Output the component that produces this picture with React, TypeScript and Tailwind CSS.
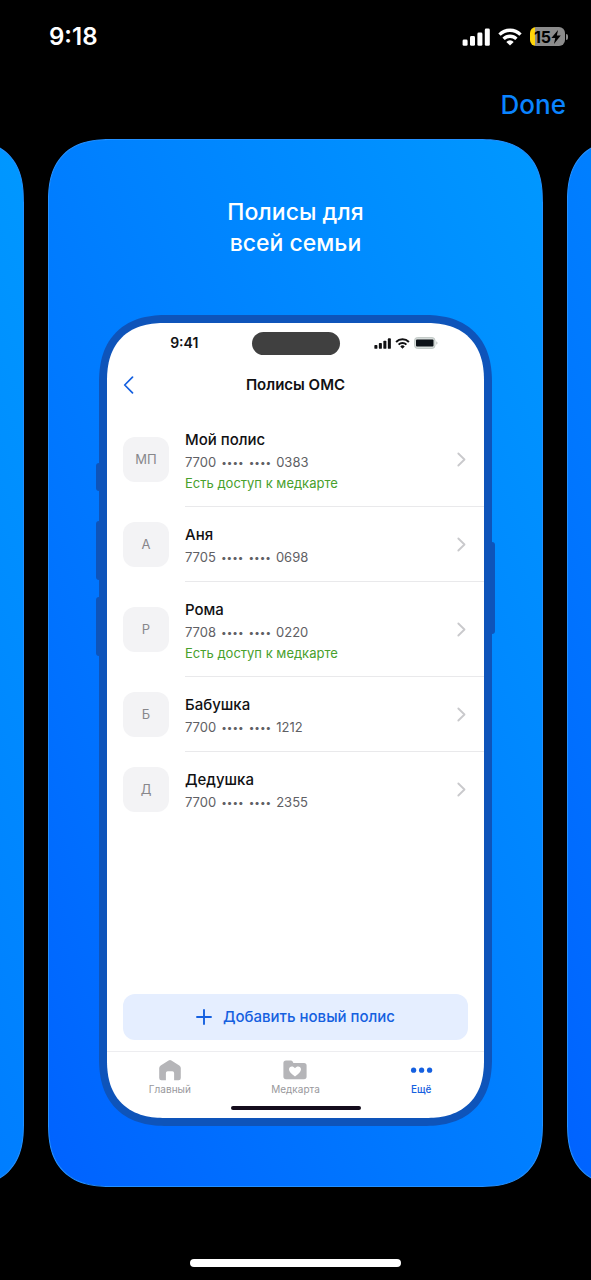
import React from "react";

type Policy = {
  initials: string;
  name: string;
  first: string;
  last: string;
  access?: boolean;
};

const policies: Policy[] = [
  { initials: "МП", name: "Мой полис", first: "7700", last: "0383", access: true },
  { initials: "А", name: "Аня", first: "7705", last: "0698" },
  { initials: "Р", name: "Рома", first: "7708", last: "0220", access: true },
  { initials: "Б", name: "Бабушка", first: "7700", last: "1212" },
  { initials: "Д", name: "Дедушка", first: "7700", last: "2355" },
];

function Signal({ className }: { className: string }) {
  return (
    <svg viewBox="0 0 28 18" className={className} fill="currentColor" aria-hidden="true">
      <rect x="0.6" y="11.5" width="5" height="6.3" rx="1.4" />
      <rect x="8" y="8" width="5" height="9.8" rx="1.4" />
      <rect x="15.4" y="4.5" width="5" height="13.3" rx="1.4" />
      <rect x="22.8" y="0.5" width="5" height="17.3" rx="1.4" />
    </svg>
  );
}

function Wifi({ className }: { className: string }) {
  return (
    <svg viewBox="0 0 24 18" className={className} fill="none" stroke="currentColor" strokeWidth="3.3" aria-hidden="true">
      <path d="M1.5 6.6 A14.8 14.8 0 0 1 22.5 6.6" />
      <path d="M5.6 10.9 A9 9 0 0 1 18.4 10.9" />
      <path d="M12 17.6 L8.3 13.9 A5.2 5.2 0 0 1 15.7 13.9 Z" fill="currentColor" stroke="none" />
    </svg>
  );
}

function Chevron({ className, d, width }: { className: string; d: string; width: number }) {
  return (
    <svg viewBox="0 0 10 18" className={className} fill="none" stroke="currentColor" strokeWidth={width} strokeLinecap="round" strokeLinejoin="round" aria-hidden="true">
      <path d={d} />
    </svg>
  );
}

function PolicyRow({ policy, divided }: { policy: Policy; divided: boolean }) {
  return (
    <li>
      <a href="#policy" className="flex items-stretch pl-4">
        <span className="flex h-[45px] w-[46px] shrink-0 items-center justify-center self-center rounded-xl bg-[#f3f3f5] text-[13px] text-[#87878b]">
          {policy.initials}
        </span>
        <span
          className={
            divided
              ? "ml-4 flex flex-1 items-center border-b border-[#e9e9eb] pr-[18px]"
              : "ml-4 flex flex-1 items-center border-b border-transparent pr-[18px]"
          }
        >
          <span className="flex flex-1 flex-col pt-[17px] pb-[13px]">
            <span className="text-[15px] leading-[22px] font-medium text-[#111113]">{policy.name}</span>
            <span className="flex items-center gap-[5px] text-[13px] leading-[22px] text-[#606064]">
              <span>{policy.first}</span>
              <span className="text-[10px] leading-5">••••</span>
              <span className="text-[10px] leading-5">••••</span>
              <span>{policy.last}</span>
            </span>
            {policy.access && <span className="text-[13px] leading-5 text-[#48a02c]">Есть доступ к медкарте</span>}
          </span>
          <Chevron className="h-[15px] w-[9px] text-[#c9c9cc]" d="M1.2 1.8 L8.6 9 L1.2 16.2" width={2.2} />
        </span>
      </a>
    </li>
  );
}

function Phone() {
  return (
    <div className="relative flex flex-1 flex-col rounded-[68px] bg-[#0e54ba] p-2 [corner-shape:superellipse(1.25)]">
      <span className="absolute top-[148px] -left-[3px] h-7 w-[3px] rounded-l-sm bg-[#0e54ba]" />
      <span className="absolute top-[206px] -left-[3px] h-[59px] w-[3px] rounded-l-sm bg-[#0e54ba]" />
      <span className="absolute top-[282px] -left-[3px] h-[59px] w-[3px] rounded-l-sm bg-[#0e54ba]" />
      <span className="absolute top-[227px] -right-[3px] h-[92px] w-[3px] rounded-r-sm bg-[#0e54ba]" />

      <div className="flex flex-1 flex-col overflow-hidden rounded-[58px] bg-white [corner-shape:superellipse(1.25)]">
        <div className="grid h-10 grid-cols-[1fr_88px_1fr] items-center">
          <span className="pl-2.5 text-center text-sm font-semibold text-[#111113]">9:41</span>
          <span className="h-[23px] rounded-full bg-[#404040]" />
          <span className="flex items-center gap-1 pl-[34px] text-[#111113]">
            <Signal className="h-[11px] w-[17px]" />
            <Wifi className="h-[11px] w-[15px]" />
            <svg viewBox="0 0 24 12" className="h-3 w-6" aria-hidden="true">
              <rect x="0.5" y="0.5" width="20.5" height="11" rx="3" fill="#d6dcda" stroke="#b9c0be" strokeWidth="0.8" />
              <rect x="2" y="2.4" width="17.5" height="7.2" rx="1" fill="#0c1117" />
              <path d="M22.3 4.2 v3.6 q1.2 -.6 1.2 -1.8 t-1.2 -1.8z" fill="#b9c0be" />
            </svg>
          </span>
        </div>

        <header className="grid h-11 grid-cols-[1fr_auto_1fr] items-center">
          <button type="button" aria-label="Назад" className="ml-4 flex h-8 w-8 items-center">
            <Chevron className="h-[18px] w-[11px] text-[#1560e0]" d="M9 1.2 L1.2 9 L9 16.8" width={1.7} />
          </button>
          <h2 className="text-[15px] font-semibold text-[#111113]">Полисы ОМС</h2>
        </header>

        <ul className="flex-1 pt-[5px]">
          {policies.map((p, i) => (
            <PolicyRow key={p.name} policy={p} divided={i < policies.length - 1} />
          ))}
        </ul>

        <button type="button" className="mx-4 mb-[11px] flex h-[46px] items-center justify-center gap-[11px] rounded-xl bg-[#e5eeff] text-[15px] font-medium text-[#1560e0]">
          <svg viewBox="0 0 16 16" className="size-4" stroke="currentColor" strokeWidth="1.9" strokeLinecap="round" aria-hidden="true">
            <path d="M8 1 V15 M1 8 H15" />
          </svg>
          Добавить новый полис
        </button>

        <nav className="grid grid-cols-3 border-t border-[#ededf0] pt-[7px] text-[10px] leading-3 text-[#98989c]">
          <a href="#home" className="flex flex-col items-center gap-0.5">
            <svg viewBox="0 0 24 22" className="h-[22px] w-6" fill="#b5b5b8" aria-hidden="true">
              <path d="M10.6 1.4 q1.4 -1 2.8 0 L21.3 6.4 q1.5 1 1.5 2.6 V19 q0 2.2 -2.2 2.2 H16.1 V14 q0 -1.8 -1.8 -1.8 H9.7 q-1.8 0 -1.8 1.8 V21.2 H3.4 q-2.2 0 -2.2 -2.2 V9 q0 -1.6 1.5 -2.6z" />
            </svg>
            Главный
          </a>
          <a href="#records" className="flex flex-col items-center gap-0.5">
            <svg viewBox="0 0 24 22" className="h-[22px] w-6" aria-hidden="true">
              <path d="M0.4 4 q0 -2.6 2.6 -2.6 H7.6 q1.6 0 2.2 1.4 l.6 1.2 H21 q2.6 0 2.6 2.6 V17.6 q0 2.6 -2.6 2.6 H3 q-2.6 0 -2.6 -2.6z" fill="#b5b5b8" />
              <path d="M12 17.4 C8.2 14.8 6 12.6 6 10.2 C6 7.2 10 6.2 12 9.2 C14 6.2 18 7.2 18 10.2 C18 12.6 15.8 14.8 12 17.4z" fill="#fff" />
            </svg>
            Медкарта
          </a>
          <a href="#more" className="flex flex-col items-center gap-0.5 font-medium text-[#1560e0]">
            <svg viewBox="0 0 24 22" className="h-[22px] w-6" fill="currentColor" aria-hidden="true">
              <circle cx="4.6" cy="11.2" r="2.6" />
              <circle cx="12.6" cy="11.2" r="2.6" />
              <circle cx="20.6" cy="11.2" r="2.6" />
            </svg>
            Ещё
          </a>
        </nav>
        <div className="mx-auto mt-[11px] mb-2 h-1 w-[130px] rounded-full bg-[#140c1c]" />
      </div>
    </div>
  );
}

const cardClass =
  "flex w-[calc(100%-96px)] shrink-0 flex-col rounded-[64px] border border-[#2390ff] bg-gradient-to-tr from-[#0062ff] to-[#0098ff] [corner-shape:superellipse(1.35)]";

export default function App() {
  return (
    <div className="flex min-h-screen flex-col bg-black font-['Inter','Noto_Sans',sans-serif]">
      <div className="flex h-[73px] items-center justify-between pr-[23px] pl-[49px] text-white">
        <span className="text-2xl font-semibold">9:18</span>
        <div className="flex items-center gap-2">
          <Signal className="h-[18px] w-7" />
          <Wifi className="h-[18px] w-6" />
          <span className="flex items-center gap-px">
            <span className="flex h-[19px] w-[35px] items-center justify-center rounded-md bg-[linear-gradient(to_right,#ffd60a_15%,#8c8c8c_15%)] text-base font-bold text-black">
              15
              <svg viewBox="0 0 9 13" className="h-[14px] w-[10px]" fill="currentColor" aria-hidden="true">
                <path d="M6.4 0 L0.2 7.4 H3.8 L2.6 13 L8.9 5.2 H5.3z" />
              </svg>
            </span>
            <span className="h-1.5 w-0.5 rounded-r-full bg-[#8c8c8c]" />
          </span>
        </div>
      </div>

      <div className="flex h-[66px] justify-end pr-[25px]">
        <button type="button" className="h-[62px] text-[26px] font-medium text-[#0a84ff]">
          Done
        </button>
      </div>

      <main className="flex flex-1 justify-center gap-6 overflow-hidden">
        <div className={cardClass} />
        <section className={cardClass}>
          <h1 className="pt-[57px] text-center text-[23px] leading-[31px] font-medium text-white">
            Полисы для
            <br />
            всей семьи
          </h1>
          <div className="flex flex-1 flex-col px-[50px] pt-14 pb-[60px]">
            <Phone />
          </div>
        </section>
        <div className={cardClass} />
      </main>

      <footer className="flex h-[93px] items-end justify-center pb-[13px]">
        <span className="h-2 w-[211px] rounded-full bg-white" />
      </footer>
    </div>
  );
}
